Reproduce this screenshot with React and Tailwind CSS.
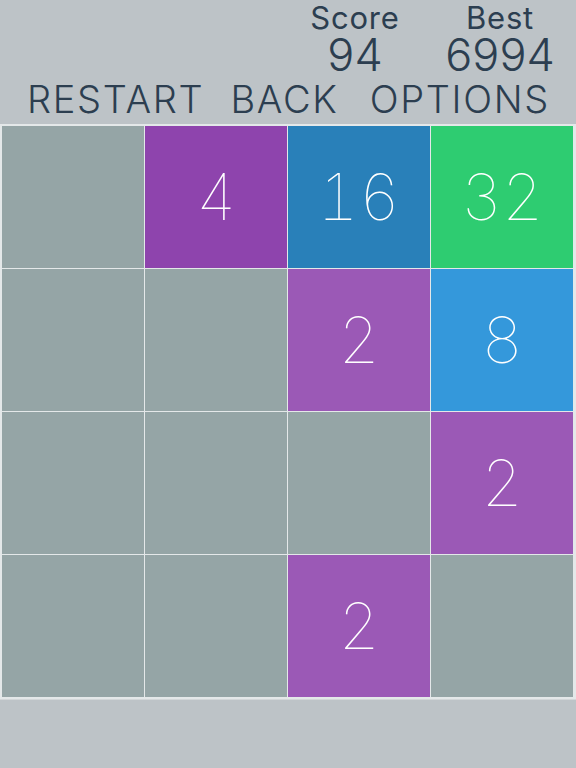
import React from "react";

const board = [
  [0, 4, 16, 32],
  [0, 0, 2, 8],
  [0, 0, 0, 2],
  [0, 0, 2, 0],
];

const tileColors = {
  0: "bg-[#95a5a6]",
  2: "bg-[#9b59b6]",
  4: "bg-[#8e44ad]",
  8: "bg-[#3498db]",
  16: "bg-[#2980b9]",
  32: "bg-[#2ecc71]",
};

const Tile = ({ value }) => {
  return (
    <div
      className={`${tileColors[value]} h-[142px] w-[142px] flex items-center justify-center text-white text-[64px] font-thin leading-none tabular-nums`}
    >
      {value ? value : ""}
    </div>
  );
};

const ScoreBox = ({ title, value }) => {
  return (
    <div className="w-[120px] flex flex-col items-center">
      <span className="text-[31px] leading-[31px] font-normal tracking-[0.8px]">
        {title}
      </span>
      <span className="text-[45px] leading-[44px] font-light">{value}</span>
    </div>
  );
};

const App = () => {
  return (
    <div
      className="w-[576px] h-[768px] bg-[#bdc3c7] flex flex-col text-[#2c3e50] overflow-hidden"
      style={{ fontFamily: "Inter, 'Liberation Sans', sans-serif" }}
    >
      {/*header*/}
      <div className="h-[124px] flex flex-col">
        <div className="flex flex-row justify-end pr-[16px] pt-[2px] gap-[25px]">
          <ScoreBox title="Score" value="94" />
          <ScoreBox title="Best" value="6994" />
        </div>
        <div className="flex flex-row pl-[27px] text-[38px] font-light leading-[44px] tracking-[1.7px]">
          <span className="mr-[26px]">RESTART</span>
          <span className="mr-[31px]">BACK</span>
          <span>OPTIONS</span>
        </div>
      </div>
      {/*board*/}
      <div className="bg-[#e4e8e9] px-[2px] py-[2px]">
        <div className="grid grid-cols-[repeat(4,142px)] gap-[1px]">
          {board.flat().map((v, i) => (
            <Tile key={i} value={v} />
          ))}
        </div>
      </div>
      {/*footer*/}
      <div className="flex-1 bg-[#bdc3c7] border-t border-[#d3d7d9]"></div>
    </div>
  );
};

export default App;
